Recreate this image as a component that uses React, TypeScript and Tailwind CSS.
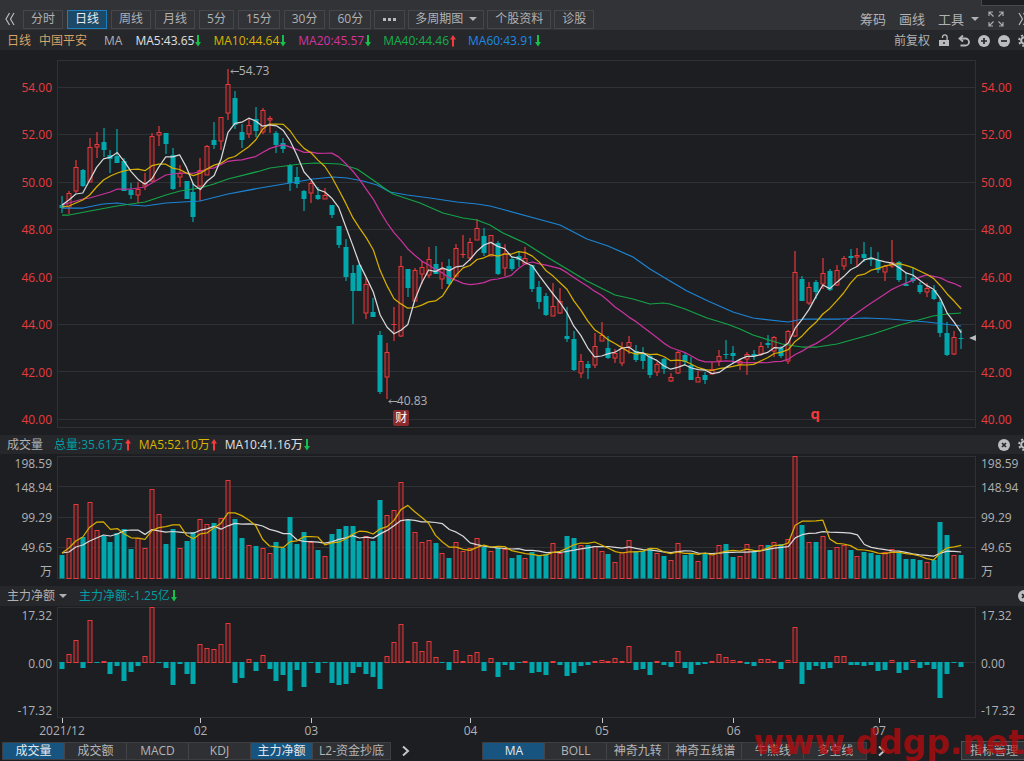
import React from 'react'

// [isUp, high, bodyTop, bodyBottom, low], in chart units
type Candle = [number, number, number, number, number]

const candles: Candle[] = [
  [0, 196, 205, 208, 213], [1, 191, 193, 207, 214], [1, 160, 167, 191, 193], [0, 169, 170, 186, 187],
  [1, 138, 147, 182, 182], [1, 132, 144, 147, 158], [0, 128, 142, 150, 157], [0, 150, 155, 159, 173],
  [0, 129, 156, 163, 163], [0, 158, 161, 191, 191], [0, 183, 190, 195, 199], [1, 182, 189, 195, 203],
  [1, 173, 183, 186, 190], [1, 133, 136, 181, 182], [1, 126, 132, 135, 146], [0, 133, 133, 144, 154],
  [0, 148, 155, 189, 190], [1, 165, 173, 177, 187], [0, 181, 181, 199, 199], [0, 183, 192, 217, 222],
  [1, 158, 170, 186, 201], [1, 145, 146, 175, 175], [0, 122, 140, 145, 149], [1, 117, 117, 141, 150],
  [1, 69, 84, 113, 120], [0, 91, 98, 125, 129], [0, 124, 132, 140, 148], [1, 118, 125, 134, 138],
  [0, 107, 119, 131, 137], [1, 108, 110, 132, 134], [1, 116, 118, 120, 133], [0, 131, 133, 145, 153],
  [0, 138, 143, 149, 153], [0, 164, 165, 183, 191], [0, 167, 177, 184, 188], [0, 190, 191, 199, 211],
  [1, 181, 183, 193, 203], [0, 187, 195, 199, 200], [1, 188, 195, 199, 199], [0, 205, 205, 215, 218],
  [0, 226, 226, 245, 248], [0, 239, 247, 277, 281], [0, 265, 273, 291, 324], [0, 264, 265, 291, 291],
  [1, 278, 284, 313, 319], [0, 298, 312, 317, 317], [0, 331, 335, 392, 394], [1, 343, 352, 377, 399],
  [1, 307, 324, 324, 341], [1, 256, 266, 336, 337], [0, 269, 269, 288, 297], [1, 268, 270, 301, 301],
  [1, 261, 267, 274, 284], [1, 247, 259, 275, 278], [0, 246, 264, 274, 274], [1, 262, 269, 279, 289],
  [0, 259, 266, 284, 285], [1, 244, 248, 276, 277], [1, 235, 254, 255, 258], [1, 238, 242, 258, 261],
  [1, 219, 228, 240, 240], [0, 228, 236, 253, 256], [1, 235, 235, 256, 256], [0, 241, 243, 274, 275],
  [1, 244, 253, 268, 276], [0, 256, 259, 269, 271], [0, 251, 256, 260, 267], [1, 247, 258, 264, 265],
  [0, 265, 265, 289, 292], [0, 281, 287, 302, 309], [0, 293, 296, 315, 316], [1, 283, 306, 316, 316],
  [1, 288, 301, 313, 314], [0, 307, 336, 339, 342], [0, 331, 339, 370, 371], [1, 354, 361, 373, 378],
  [0, 361, 364, 368, 379], [1, 333, 346, 365, 368], [1, 322, 335, 341, 341], [0, 336, 348, 358, 359],
  [1, 349, 353, 358, 363], [1, 342, 348, 363, 366], [1, 336, 342, 347, 354], [0, 345, 351, 360, 362],
  [0, 347, 354, 361, 369], [0, 355, 356, 375, 378], [1, 362, 364, 372, 376], [0, 358, 359, 369, 374],
  [1, 373, 377, 381, 382], [1, 351, 352, 373, 374], [0, 353, 355, 362, 366], [0, 357, 365, 380, 380],
  [1, 371, 377, 382, 382], [0, 372, 375, 380, 384], [1, 362, 369, 374, 374], [1, 350, 356, 361, 366],
  [0, 340, 354, 355, 359], [0, 346, 353, 356, 364], [1, 359, 361, 364, 370], [1, 352, 354, 359, 375],
  [0, 350, 354, 356, 360], [1, 342, 346, 354, 356], [0, 335, 343, 345, 348], [1, 336, 337, 351, 357],
  [0, 346, 348, 356, 358], [1, 330, 331, 361, 364], [1, 251, 272, 336, 337], [0, 276, 279, 301, 301],
  [1, 282, 287, 303, 305], [0, 280, 282, 292, 299], [1, 258, 273, 284, 289], [0, 269, 271, 290, 291],
  [1, 265, 270, 285, 286], [1, 256, 258, 266, 270], [0, 249, 256, 258, 264], [1, 248, 255, 257, 267],
  [0, 242, 254, 258, 262], [0, 247, 258, 260, 266], [0, 252, 260, 270, 273], [1, 265, 266, 272, 281],
  [1, 240, 262, 266, 268], [0, 261, 262, 280, 282], [0, 272, 284, 286, 286], [0, 268, 278, 281, 283],
  [0, 282, 285, 292, 294], [1, 283, 288, 292, 297], [0, 285, 290, 299, 300], [0, 298, 302, 333, 337],
  [0, 322, 333, 355, 356], [1, 331, 337, 354, 355], [0, 329, 338, 339, 349],
]

const volumes = [
  555, 538, 504, 537, 502, 530, 536, 542, 533, 529, 549, 538, 548, 489, 514, 544, 529, 548, 541, 532,
  519, 524, 523, 518, 480, 519, 538, 545, 546, 548, 553, 542, 548, 517, 544, 532, 542, 550, 556, 534,
  529, 526, 526, 541, 536, 541, 500, 515, 510, 482, 520, 532, 542, 540, 543, 553, 558, 542, 551, 548,
  538, 547, 551, 548, 549, 558, 555, 558, 552, 555, 554, 543, 553, 536, 538, 545, 545, 546, 551, 554,
  562, 552, 540, 551, 551, 548, 553, 556, 560, 543, 555, 553, 561, 553, 553, 545, 544, 557, 556, 544,
  551, 545, 545, 542, 544, 539, 456, 525, 542, 542, 536, 550, 547, 545, 550, 556, 552, 553, 555, 552,
  549, 553, 559, 559, 560, 562, 560, 522, 535, 555, 555,
]

const flows = [
  -7, 8, 22, -6, 42, -1, 1, -12, -4, -19, -10, -4, 6, 55, -1, -6, -23, -2, -12, -22,
  18, 14, 13, 18, 39, -21, -16, 3, -9, 7, -7, -19, -13, -29, -8, -25, -1, -11, -1, -21,
  -23, -22, -11, -5, -12, -15, -27, 6, 20, 38, 1, 20, 11, 21, 5, -1, -8, 12, 1, 7,
  10, -9, 4, -15, -3, -8, -1, 1, -11, -10, -13, 1, -3, -14, -11, -4, -3, 1, 2, 1,
  4, 1, 16, -8, -7, -13, 1, -3, -5, 11, -6, -12, -3, -2, 1, 8, 5, 2, 1, -2,
  -4, 3, 3, 1, -7, 2, 35, -22, -8, -4, -7, -6, 6, 6, -3, -3, -4, -3, -9, -8,
  2, -11, -8, 2, -6, -3, -7, -36, -12, -1, -5,
]

// long averages need history from before the first candle, so they are kept as points
const ma40 =
  '62,215 69,215 90,211 117,206 131,204 145,202 166,195 180,191 200,188 214,184 228,179 260,171 270,168 300,164 315,163 340,164 357,169 373,180 387,190 393,194 420,203 443,213 463,218 477,220 490,225 503,233 525,243 547,257 567,269 587,281 615,295 633,299 650,304 663,303 670,304 685,309 707,318 727,324 740,329 753,335 782,344 802,347 817,347 837,344 873,334 900,325 933,316 947,314 961,313'
const ma60 =
  '62,208 83,208 103,204 117,203 131,205 145,206 166,203 200,201 228,194 260,188 290,183 313,179 333,177 347,178 363,181 377,185 390,192 407,195 430,198 457,202 477,204 490,206 505,210 560,225 587,239 608,246 633,257 650,269 670,281 687,291 708,301 733,312 753,318 788,322 803,319 840,319 865,318 890,319 927,322 961,326'

const months = [
  { label: '2021/12', span: 20 },
  { label: '02', span: 16 },
  { label: '03', span: 23 },
  { label: '04', span: 19 },
  { label: '05', span: 19 },
  { label: '06', span: 21 },
  { label: '07', span: 14 },
]

const priceLabels = ['54.00', '52.00', '50.00', '48.00', '46.00', '44.00', '42.00', '40.00']
const periods = ['分时', '日线', '周线', '月线', '5分', '15分', '30分', '60分']
const panelTabs = ['成交量', '成交额', 'MACD', 'KDJ', '主力净额', 'L2-资金抄底']
const mainTabs = ['MA', 'BOLL', '神奇九转', '神奇五线谱', '牛熊线', '多空线']

const RED = '#e8393b'
const TEAL = '#00a8ae'
const GRID = '#303135'

const xOf = (i: number) => 62 + (i * 899.2) / 130
const closes = candles.map(([up, , top, bottom]) => (up ? top : bottom))

const average = (values: number[], size: number, lead: number[]) =>
  values
    .map((_, i) => {
      if (i < size - 1) return `${xOf(i)},${lead[i]}`
      const part = values.slice(i - size + 1, i + 1)
      return `${xOf(i)},${part.reduce((a, b) => a + b, 0) / size}`
    })
    .join(' ')

const Line: React.FC<{ points: string; color: string }> = ({ points, color }) => (
  <polyline points={points} fill="none" stroke={color} strokeWidth="1.25" strokeLinejoin="round" />
)

const Bar: React.FC<{ i: number; top: number; bottom: number; up: boolean }> = ({
  i,
  top,
  bottom,
  up,
}) => {
  const x = Math.round(xOf(i))
  return up && bottom - top > 1 ? (
    <rect
      x={x - 2}
      y={top + 0.5}
      width="4"
      height={bottom - top - 0.5}
      fill="#3a1f23"
      stroke={RED}
    />
  ) : (
    <rect
      x={x - 2.5}
      y={top}
      width="5"
      height={Math.max(bottom - top, 1)}
      fill={up ? RED : TEAL}
    />
  )
}

const Arrow: React.FC<{ up?: boolean }> = ({ up }) => (
  <svg width="6" height="12" viewBox="0 0 6 12" className="shrink-0">
    {up ? (
      <path d="M3 0 6 4.500H4V11.500H2V4.500H0Z" fill="#f43a3a" />
    ) : (
      <path d="M2 0H4V7H6L3 11.500 0 7H2Z" fill="#14bf4c" />
    )}
  </svg>
)

const Caret = () => (
  <svg width="8" height="4" viewBox="0 0 8 4" className="shrink-0">
    <path d="M0 0H8L4 4Z" fill="currentColor" />
  </svg>
)

const DoubleChevron: React.FC<{ right?: boolean }> = ({ right }) => (
  <svg width="10" height="14" viewBox="0 0 10 14" fill="none" stroke="#b9babc" strokeWidth="1.2">
    <path d={right ? 'M1 1 4.500 7 1 13M5.500 1 9 7 5.500 13' : 'M4.500 1 1 7 4.500 13M9 1 5.500 7 9 13'} />
  </svg>
)

const Expand = () => (
  <svg width="16" height="16" viewBox="0 0 16 16" fill="none" stroke="#a9aaac" strokeWidth="1.2">
    <path d="M1 5V1H5M1 1 5.500 5.500M11 1H15V5M15 1 10.500 5.500M1 11V15H5M1 15 5.500 10.500M11 15H15V11M15 15 10.500 10.500" />
  </svg>
)

const Lock = () => (
  <svg width="12" height="13" viewBox="0 0 12 13">
    <path d="M4.500 4V3.200A2.300 2.300 0 0 1 9.100 3.200V6.500" fill="none" stroke="#b9babc" strokeWidth="1.3" />
    <path d="M1 6H11V12H1Z" fill="#b9babc" />
    <path d="M5.300 8H6.700V10H5.300Z" fill="#26272b" />
  </svg>
)

const Undo = () => (
  <svg width="12" height="12" viewBox="0 0 12 12" fill="none" stroke="#b9babc" strokeWidth="1.8">
    <path d="M2 3.500H7.500A3.500 3.500 0 0 1 7.500 10.500H2.500" />
    <path d="M5 0.500 1.500 3.500 5 6.500" />
  </svg>
)

const RoundIcon: React.FC<{ sign: 'plus' | 'minus' | 'close' }> = ({ sign }) => {
  const d = {
    plus: 'M3 6H9M6 3V9',
    minus: 'M3 6H9',
    close: 'M4 4 8 8M8 4 4 8',
  }[sign]
  return (
    <svg width="12" height="12" viewBox="0 0 12 12">
      <circle cx="6" cy="6" r="6" fill="#bcbdbf" />
      <path d={d} stroke="#26272b" strokeWidth="1.7" />
    </svg>
  )
}

const Gear = () => (
  <svg width="13" height="13" viewBox="0 0 14 14" fill="none">
    <circle cx="7" cy="7" r="3.600" stroke="#bcbdbf" strokeWidth="2.200" />
    <circle cx="7" cy="7" r="5.700" stroke="#bcbdbf" strokeWidth="2.200" strokeDasharray="2.240 2.240" />
  </svg>
)

const IconButton: React.FC<{ label: string; children: React.ReactNode }> = ({ label, children }) => (
  <button aria-label={label} className="flex shrink-0 items-center justify-center">
    {children}
  </button>
)

const Reading: React.FC<{ color: string; up?: boolean; children: React.ReactNode }> = ({
  color,
  up,
  children,
}) => (
  <span className={`flex items-center gap-px ${color}`}>
    {children}
    <Arrow up={up} />
  </span>
)

const Tabs: React.FC<{ items: string[]; active: string[] }> = ({ items, active }) => (
  <div className="flex h-[18px] border border-[#3d3e42]">
    {items.map((item) => (
      <button
        key={item}
        className={`min-w-[62px] border-r border-[#434448] px-[6px] whitespace-nowrap last:border-r-0 ${
          active.includes(item) ? 'bg-[#175580] text-[#e4e8ec]' : 'bg-[#2f3034] text-[#b4b5b7]'
        }`}
      >
        {item}
      </button>
    ))}
  </div>
)

const PriceAxis: React.FC<{ side: string }> = ({ side }) => (
  <div className={`flex shrink-0 flex-col justify-between pt-[28px] pb-[5px] leading-5 text-[#e83c3e] ${side}`}>
    {priceLabels.map((label) => (
      <span key={label}>{label}</span>
    ))}
  </div>
)

const VolumeAxis: React.FC<{ side: string }> = ({ side }) => (
  <div className={`flex shrink-0 flex-col pt-px ${side}`}>
    <span className="leading-[18px]">198.59</span>
    <span className="leading-[30px]">148.94</span>
    <span className="leading-[30px]">99.29</span>
    <span className="leading-[30px]">49.65</span>
    <span className="leading-[18px]">万</span>
  </div>
)

const FlowAxis: React.FC<{ side: string }> = ({ side }) => (
  <div className={`-mb-[3px] flex shrink-0 flex-col justify-between leading-5 ${side}`}>
    <span>17.32</span>
    <span>0.00</span>
    <span>-17.32</span>
  </div>
)

const left = 'w-[57px] pr-[5px] text-right'
const right = 'w-[48px] pl-[5px] text-left'

const App: React.FC = () => {
  return (
    <div className="relative flex min-h-screen w-full flex-col overflow-hidden bg-[#1d1e22] font-['Open_Sans','Noto_Sans_CJK_SC',sans-serif] text-[12px] leading-4 text-[#b0b1b3]">
      <header className="flex h-[30px] items-center justify-between bg-[#323337] pt-2">
        <div className="flex items-center gap-[3px]">
          <div className="flex w-5 justify-center">
            <IconButton label="收起">
              <DoubleChevron />
            </IconButton>
          </div>
          <div className="flex gap-1">
            {periods.map((period) => (
              <button
                key={period}
                className={`h-[19px] border px-[7px] ${
                  period === '日线'
                    ? 'border-[#1b7fbd] bg-[#1c4968] text-[#e6ebef]'
                    : 'border-[#45464a]'
                }`}
              >
                {period}
              </button>
            ))}
          </div>
          <button aria-label="更多周期" className="flex h-[19px] items-center gap-[2px] border border-[#45464a] px-[8px]">
            <i className="size-[3px] bg-[#b9babc]" />
            <i className="size-[3px] bg-[#b9babc]" />
            <i className="size-[3px] bg-[#b9babc]" />
          </button>
          <button className="flex h-[19px] items-center gap-[6px] border border-[#45464a] px-[6px]">
            多周期图
            <Caret />
          </button>
          <button className="h-[19px] border border-[#45464a] px-[7px]">个股资料</button>
          <button className="h-[19px] border border-[#45464a] px-[7px]">诊股</button>
        </div>
        <div className="-mr-[4px] flex shrink-0 items-center text-[13px]">
          <button className="mr-[13px]">筹码</button>
          <button className="mr-[13px]">画线</button>
          <button className="mr-[9px] flex items-center gap-[7px]">
            工具
            <Caret />
          </button>
          <span className="mr-[14px] flex">
            <IconButton label="全屏">
              <Expand />
            </IconButton>
          </span>
          <IconButton label="展开">
            <DoubleChevron right />
          </IconButton>
        </div>
      </header>
      <div className="absolute top-0 right-0 h-[6px] w-[43px] border-b border-l border-[#48494d] bg-[#1d1e22]" />

      <div className="flex h-5 items-center justify-between bg-[#26272b] pt-px pl-[7px]">
        <div className="flex items-center gap-3">
          <span className="flex gap-2 text-[#d5a268]">
            <span>日线</span>
            <span>中国平安</span>
          </span>
          <span className="px-[5px] pr-px">MA</span>
          <Reading color="text-[#e0e0e0]">MA5:43.65</Reading>
          <Reading color="text-[#dcb400]">MA10:44.64</Reading>
          <Reading color="text-[#d2349f]">MA20:45.57</Reading>
          <Reading color="text-[#16b04c]" up>
            MA40:44.46
          </Reading>
          <Reading color="text-[#1c8ae0]">MA60:43.91</Reading>
        </div>
        <div className="-mr-[7px] flex shrink-0 items-center gap-[8px]">
          <button>前复权</button>
          <IconButton label="锁定">
            <Lock />
          </IconButton>
          <IconButton label="撤销">
            <Undo />
          </IconButton>
          <IconButton label="放大">
            <RoundIcon sign="plus" />
          </IconButton>
          <IconButton label="缩小">
            <RoundIcon sign="minus" />
          </IconButton>
          <IconButton label="设置">
            <Gear />
          </IconButton>
        </div>
      </div>

      <section className="flex">
        <PriceAxis side={left} />
        <div className="relative min-w-0 flex-1 pt-[10px] pb-[7px]">
          <svg viewBox="57 60 919 368" preserveAspectRatio="none" className="block h-[368px] w-full">
            <g stroke={GRID} fill="none">
              <rect x="57.5" y="60.5" width="918" height="367" />
              {priceLabels.map((label, i) => (
                <path key={label} d={`M57 ${Math.round(87 + i * 47.4) + 0.5}H976`} />
              ))}
            </g>
            {candles.map(([up, high, top, bottom, low], i) => {
              const x = Math.round(xOf(i))
              return (
                <g key={i}>
                  <path
                    d={`M${x} ${high}V${top}M${x} ${bottom}V${low}`}
                    stroke={up ? RED : TEAL}
                    strokeWidth="1.2"
                  />
                  <Bar i={i} top={top} bottom={bottom} up={up === 1} />
                </g>
              )
            })}
            <Line points={ma60} color="#1c84d4" />
            <Line points={ma40} color="#14a448" />
            <Line
              points={average(closes, 20, [
                205, 203, 201, 199, 198, 196, 194, 192, 189, 189, 189, 188, 187, 183, 179, 175, 174, 173, 173,
              ])}
              color="#c8329c"
            />
            <Line
              points={average(closes, 10, [207, 206, 203, 200, 195, 187, 180, 176, 173])}
              color="#d6ae00"
            />
            <Line points={average(closes, 5, [205, 200, 194, 193])} color="#d8d8da" />
            <path d="M976 335V341L969 338Z" fill="#b9babc" />
          </svg>
          <span className="absolute top-[13px] left-[18.8%] flex items-center">
            <svg width="9" height="7" viewBox="0 0 9 7" fill="none" stroke="#a8a9ab">
              <path d="M9 3.500H1M3 1.500 1 3.500 3 5.500" />
            </svg>
            54.73
          </span>
          <span className="absolute top-[343px] left-[36%] flex items-center">
            <svg width="9" height="7" viewBox="0 0 9 7" fill="none" stroke="#a8a9ab">
              <path d="M9 3.500H1M3 1.500 1 3.500 3 5.500" />
            </svg>
            40.83
          </span>
          <span className="absolute top-[360px] left-[36.6%] size-[16px] rounded-xs bg-[#8a2a2c] text-center text-white">
            财
          </span>
          <span className="absolute top-[355px] left-[82%] text-[15px] font-bold text-[#f03a3c]">q</span>
        </div>
        <PriceAxis side={right} />
      </section>

      <div className="flex h-[19px] items-center justify-between bg-[#26272b] pl-[7px]">
        <div className="flex items-center gap-2">
          <span className="pr-[3px]">成交量</span>
          <Reading color="text-[#009fa5]" up>
            总量:35.61万
          </Reading>
          <Reading color="text-[#dcb400]" up>
            MA5:52.10万
          </Reading>
          <Reading color="text-[#e0e0e0]">MA10:41.16万</Reading>
        </div>
        <div className="-mr-[7px] flex shrink-0 items-center gap-[8px]">
          <IconButton label="关闭成交量">
            <RoundIcon sign="close" />
          </IconButton>
          <IconButton label="设置成交量">
            <Gear />
          </IconButton>
        </div>
      </div>
      <section className="flex pb-[5px]">
        <VolumeAxis side={left} />
        <div className="min-w-0 flex-1 pt-[2px]">
          <svg viewBox="57 456 919 123" preserveAspectRatio="none" className="block h-[123px] w-full">
            <g stroke={GRID} fill="none">
              <rect x="57.5" y="456.5" width="918" height="122" />
              <path d="M57 486.500H976M57 517.500H976M57 547.500H976" />
            </g>
            {volumes.map((top, i) => (
              <Bar key={i} i={i} top={top} bottom={578.5} up={candles[i][0] === 1} />
            ))}
            <Line
              points={average(volumes, 10, [553, 552, 547, 545, 541, 538, 535, 536, 534])}
              color="#d8d8da"
            />
            <Line points={average(volumes, 5, [553, 548, 541, 537])} color="#d6ae00" />
          </svg>
        </div>
        <VolumeAxis side={right} />
      </section>

      <div className="flex h-5 items-center justify-between bg-[#26272b] pl-[7px]">
        <div className="flex items-center gap-3">
          <button className="flex items-center gap-1">
            主力净额
            <Caret />
          </button>
          <Reading color="text-[#009fa5]">主力净额:-1.25亿</Reading>
        </div>
        <div className="-mr-[6px] flex shrink-0">
          <IconButton label="关闭主力净额">
            <RoundIcon sign="close" />
          </IconButton>
        </div>
      </div>
      <section className="flex">
        <FlowAxis side={left} />
        <div className="min-w-0 flex-1 pt-px">
          <svg viewBox="57 607 919 111" preserveAspectRatio="none" className="block h-[111px] w-full">
            <g stroke={GRID} fill="none">
              <rect x="57.5" y="607.5" width="918" height="110" />
              <path d="M57 662.500H976" />
            </g>
            {flows.map((flow, i) => (
              <Bar
                key={i}
                i={i}
                top={flow > 0 ? 662 - flow : 662}
                bottom={flow > 0 ? 662.5 : 662 - flow}
                up={flow > 0}
              />
            ))}
          </svg>
        </div>
        <FlowAxis side={right} />
      </section>
      <div className="mr-[48px] ml-[62px] flex h-[23px]">
        {months.map((month) => (
          <React.Fragment key={month.label}>
            <div className="flex w-0 flex-col items-center">
              <i className="h-[5px] w-px shrink-0 bg-[#c8c8ca]" />
              <span>{month.label}</span>
            </div>
            <div className="basis-0" style={{ flexGrow: month.span }} />
          </React.Fragment>
        ))}
      </div>

      <footer className="flex items-center pb-px pl-[2px]">
        <div className="flex shrink-0 basis-[47%] items-center gap-[10px]">
          <Tabs items={panelTabs} active={['成交量', '主力净额']} />
          <IconButton label="更多副图指标">
            <svg width="10" height="10" viewBox="0 0 10 10" fill="none" stroke="#c4c5c7" strokeWidth="2">
              <path d="M2 0.500 7 5 2 9.500" />
            </svg>
          </IconButton>
        </div>
        <div className="flex flex-1 items-center gap-[10px]">
          <Tabs items={mainTabs} active={['MA']} />
          <IconButton label="更多主图指标">
            <svg width="10" height="10" viewBox="0 0 10 10" fill="none" stroke="#c4c5c7" strokeWidth="2">
              <path d="M2 0.500 7 5 2 9.500" />
            </svg>
          </IconButton>
        </div>
        <button className="-mr-[3px] h-[19px] shrink-0 border border-[#505155] bg-[#2f3034] px-[8px] whitespace-nowrap">
          指标管理
        </button>
      </footer>
      <div className="pointer-events-none absolute right-0 bottom-0 font-['DejaVu_Sans',sans-serif] text-[33px] leading-[36px] font-bold text-[#b80a0c]/75">
        www.ddgp.net
      </div>
    </div>
  )
}

export default App
